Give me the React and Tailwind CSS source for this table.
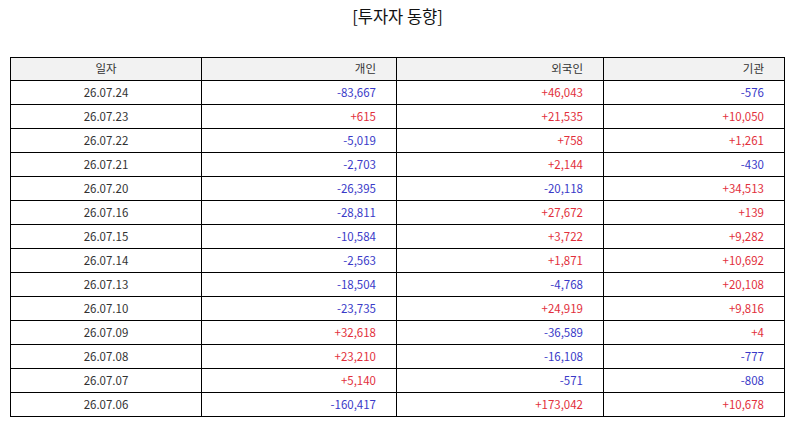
import React from "react";

const rows = [
  ["26.07.24", "-83,667", "+46,043", "-576"],
  ["26.07.23", "+615", "+21,535", "+10,050"],
  ["26.07.22", "-5,019", "+758", "+1,261"],
  ["26.07.21", "-2,703", "+2,144", "-430"],
  ["26.07.20", "-26,395", "-20,118", "+34,513"],
  ["26.07.16", "-28,811", "+27,672", "+139"],
  ["26.07.15", "-10,584", "+3,722", "+9,282"],
  ["26.07.14", "-2,563", "+1,871", "+10,692"],
  ["26.07.13", "-18,504", "-4,768", "+20,108"],
  ["26.07.10", "-23,735", "+24,919", "+9,816"],
  ["26.07.09", "+32,618", "-36,589", "+4"],
  ["26.07.08", "+23,210", "-16,108", "-777"],
  ["26.07.07", "+5,140", "-571", "-808"],
  ["26.07.06", "-160,417", "+173,042", "+10,678"],
];

function Num({ v }) {
  const cls = v.startsWith("-") ? "text-[#3a3ac8]" : "text-[#e2303c]";
  return <td className={`border border-black h-[24px] text-right pr-[20px] ${cls}`}>{v}</td>;
}

export default function App() {
  return (
    <div
      className="w-[795px] h-[425px] bg-white text-[#333]"
      style={{ fontFamily: '"Noto Sans CJK KR", "Noto Sans", sans-serif' }}
    >
      <div className="h-[57px] pt-[3px] text-center text-[16.5px] leading-[26px] text-[#111]">
        [투자자 동향]
      </div>
      <div className="px-[10px]">
        <table className="w-full border-collapse border border-black text-[11.5px] leading-none">
          <thead>
            <tr className="bg-[#f2f2f2]">
              <th className="w-[191px] border border-black h-[23px] font-normal text-center">일자</th>
              <th className="w-[195px] border border-black h-[23px] font-normal text-right pr-[20px]">개인</th>
              <th className="w-[207px] border border-black h-[23px] font-normal text-right pr-[20px]">외국인</th>
              <th className="border border-black h-[23px] font-normal text-right pr-[20px]">기관</th>
            </tr>
          </thead>
          <tbody>
            {rows.map((r) => (
              <tr key={r[0]}>
                <td className="border border-black h-[24px] text-center">{r[0]}</td>
                <Num v={r[1]} />
                <Num v={r[2]} />
                <Num v={r[3]} />
              </tr>
            ))}
          </tbody>
        </table>
      </div>
    </div>
  );
}
